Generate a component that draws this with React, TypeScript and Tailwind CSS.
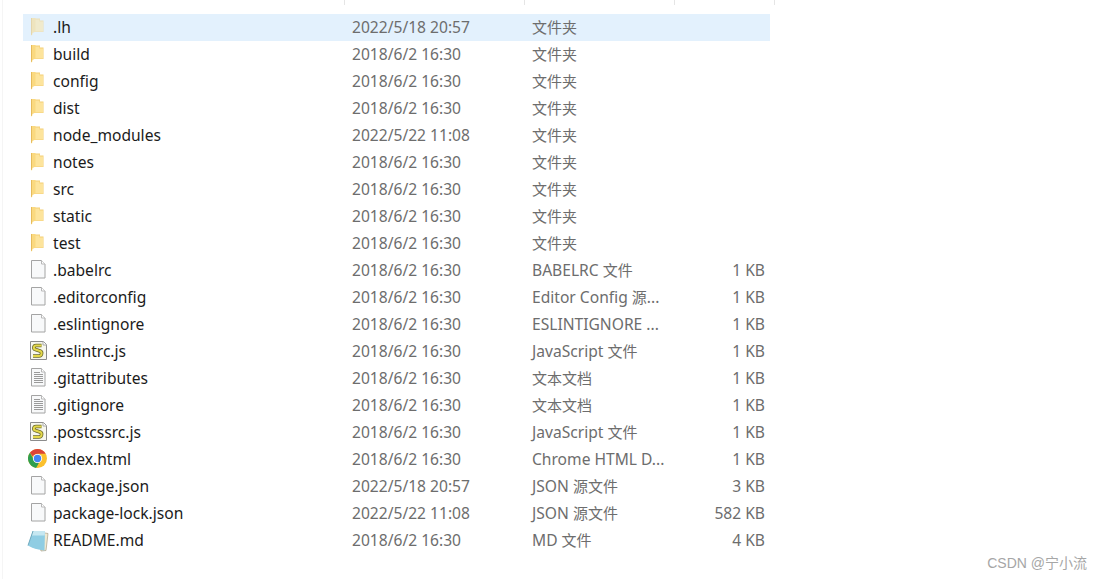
import React from 'react';

type IconKind = 'folder' | 'folderFaded' | 'file' | 'text' | 'script' | 'chrome' | 'notepad';

type Row = { icon: IconKind; name: string; date: string; type: string; size?: string };

const rows: Row[] = [
  { icon: 'folderFaded', name: '.lh', date: '2022/5/18 20:57', type: '文件夹' },
  { icon: 'folder', name: 'build', date: '2018/6/2 16:30', type: '文件夹' },
  { icon: 'folder', name: 'config', date: '2018/6/2 16:30', type: '文件夹' },
  { icon: 'folder', name: 'dist', date: '2018/6/2 16:30', type: '文件夹' },
  { icon: 'folder', name: 'node_modules', date: '2022/5/22 11:08', type: '文件夹' },
  { icon: 'folder', name: 'notes', date: '2018/6/2 16:30', type: '文件夹' },
  { icon: 'folder', name: 'src', date: '2018/6/2 16:30', type: '文件夹' },
  { icon: 'folder', name: 'static', date: '2018/6/2 16:30', type: '文件夹' },
  { icon: 'folder', name: 'test', date: '2018/6/2 16:30', type: '文件夹' },
  { icon: 'file', name: '.babelrc', date: '2018/6/2 16:30', type: 'BABELRC 文件', size: '1 KB' },
  { icon: 'file', name: '.editorconfig', date: '2018/6/2 16:30', type: 'Editor Config 源...', size: '1 KB' },
  { icon: 'file', name: '.eslintignore', date: '2018/6/2 16:30', type: 'ESLINTIGNORE ...', size: '1 KB' },
  { icon: 'script', name: '.eslintrc.js', date: '2018/6/2 16:30', type: 'JavaScript 文件', size: '1 KB' },
  { icon: 'text', name: '.gitattributes', date: '2018/6/2 16:30', type: '文本文档', size: '1 KB' },
  { icon: 'text', name: '.gitignore', date: '2018/6/2 16:30', type: '文本文档', size: '1 KB' },
  { icon: 'script', name: '.postcssrc.js', date: '2018/6/2 16:30', type: 'JavaScript 文件', size: '1 KB' },
  { icon: 'chrome', name: 'index.html', date: '2018/6/2 16:30', type: 'Chrome HTML D...', size: '1 KB' },
  { icon: 'file', name: 'package.json', date: '2022/5/18 20:57', type: 'JSON 源文件', size: '3 KB' },
  { icon: 'file', name: 'package-lock.json', date: '2022/5/22 11:08', type: 'JSON 源文件', size: '582 KB' },
  { icon: 'notepad', name: 'README.md', date: '2018/6/2 16:30', type: 'MD 文件', size: '4 KB' },
];

const FolderIcon = ({ faded }: { faded?: boolean }) => (
  <svg width="22" height="23" viewBox="0 0 22 23" className={faded ? 'opacity-50' : ''}>
    <path d="M5 2.500h8v2h3.500V16H5z" fill="#f4cf74" />
    <path d="M6 3.500h6.500v2H16V15.500H6z" fill="#fde49c" />
    <path d="M4 2h4.500v13.500L5.500 17 5 19.500l-1-.5z" fill="#fad980" />
    <path d="M4 2h1v17l-1-.5z" fill="#e6bb5c" />
  </svg>
);

const PageIcon = ({ lines }: { lines?: boolean }) => (
  <svg width="22" height="23" viewBox="0 0 22 23">
    <path d="M4.500 1.500h10l3.500 3.500v14H4.500z" fill="#f8f9fa" stroke="#a4a4a4" />
    <path d="M14.500 1.500v3.500H18" fill="#fff" stroke="#b8b8b8" />
    {lines && (
      <path d="M7 5.500h6M7 7.500h9M7 9.500h9M7 11.500h9M7 13.500h9M7 15.500h9" stroke="#9a9a9a" strokeWidth="1" />
    )}
  </svg>
);

const ScriptIcon = () => (
  <svg width="22" height="23" viewBox="0 0 22 23">
    <path d="M3.500 1.500h13l3 3v15h-16z" fill="#f7f7ee" stroke="#8c8c8c" />
    <path d="M16 1.500v3.500h3.500" fill="#fff" stroke="#a8a8a8" />
    <path d="M14.500 5.500H9C6.500 5.500 6 9 8.500 9.500l4.500 1.500c2.500.8 2 5-1 5H6" fill="none" stroke="#6b6a2e" strokeWidth="3.600" />
    <path d="M14.500 5.500H9C6.500 5.500 6 9 8.500 9.500l4.500 1.500c2.500.8 2 5-1 5H6" fill="none" stroke="#e4d84a" strokeWidth="2" />
  </svg>
);

const ChromeIcon = () => (
  <svg width="22" height="23" viewBox="0 0 22 23">
    <g transform="translate(-0.500 -0.500)">
      <circle cx="11" cy="11" r="9.500" fill="#fbc02d" />
      <path d="M11 1.500a9.500 9.500 0 0 1 8.230 4.750H11a4.750 4.750 0 0 0-4.400 3L3.400 5.300A9.500 9.500 0 0 1 11 1.500z" fill="#dc4437" />
      <path d="M3.400 5.300l4.100 7.100a4.750 4.750 0 0 0 5 2.900L9.600 20.400A9.500 9.500 0 0 1 3.400 5.300z" fill="#2f9e4f" />
      <circle cx="11" cy="11" r="4.600" fill="#fff" />
      <circle cx="11" cy="11" r="3.700" fill="#4285f4" />
    </g>
  </svg>
);

const NotepadIcon = () => (
  <svg width="22" height="23" viewBox="0 0 22 23">
    <path d="M9 2.500l12 2-2 17-5 .5z" fill="#efe9d2" stroke="#a9a08a" strokeWidth=".7" />
    <path d="M6 2h12l-.5 19.500-6-1C7 19.500 3 18 1 16.500z" fill="#8fcde3" />
    <path d="M6 2h12l-.3 4.500H4.500z" fill="#c6e7f1" />
    <path d="M1 16.500L6 2" stroke="#6fa9bd" />
  </svg>
);

const FileIcon = ({ kind }: { kind: IconKind }) => {
  if (kind === 'folder') return <FolderIcon />;
  if (kind === 'folderFaded') return <FolderIcon faded />;
  if (kind === 'text') return <PageIcon lines />;
  if (kind === 'script') return <ScriptIcon />;
  if (kind === 'chrome') return <ChromeIcon />;
  if (kind === 'notepad') return <NotepadIcon />;
  return <PageIcon />;
};

// latin runs sit a bit wider than the CJK ones in the reference font
const TypeLabel = ({ text }: { text: string }) => (
  <>
    {text.split(/([\u4e00-\u9fff]+)/).map((part, i) =>
      i % 2 === 1 ? <span key={i}>{part}</span> : <span key={i} className="text-[15.6px]">{part}</span>
    )}
  </>
);

export default function App() {
  return (
    <div
      className="relative h-[579px] w-[1102px] overflow-hidden bg-white pl-[2px] text-[15px]"
      style={{ fontFamily: '"Noto Sans", "Noto Sans CJK SC", sans-serif' }}
    >
      <div className="h-full border-l border-[#f5f5f5]">
        {/* column header ticks */}
        <div className="flex h-[5px]">
          <div className="w-[342px] border-r border-[#e5e5e5]" />
          <div className="w-[180px] border-r border-[#e5e5e5]" />
          <div className="w-[150px] border-r border-[#e5e5e5]" />
          <div className="w-[100px] border-r border-[#e5e5e5]" />
        </div>

        <ul className="ml-[20px] mt-[9px] w-[747px]">
          {rows.map((row, i) => (
            <li key={row.name} className={`flex h-[27px] items-center ${i === 0 ? 'bg-[#e3f1fd]' : ''}`}>
              <div className="flex w-[321px] items-center">
                <span className="ml-[4px] mr-[4px] flex h-[23px] w-[22px] items-center justify-center">
                  <FileIcon kind={row.icon} />
                </span>
                <span className="text-[15.6px] text-[#1b1b1b]">{row.name}</span>
              </div>
              <div className="w-[180px] pl-[8px] text-[15.6px] text-[#6d6d6d]">{row.date}</div>
              <div className="w-[150px] pl-[8px] text-[#6d6d6d]">
                <TypeLabel text={row.type} />
              </div>
              <div className="w-[96px] pr-[5px] text-right text-[15.6px] text-[#6d6d6d]">{row.size}</div>
            </li>
          ))}
        </ul>
      </div>

      <div
        className="absolute bottom-[5px] right-[15px] text-[14px] text-[#a6a6a6]"
        style={{ fontFamily: '"Liberation Sans", "Noto Sans CJK SC", sans-serif' }}
      >
        CSDN @宁小流
      </div>
    </div>
  );
}
